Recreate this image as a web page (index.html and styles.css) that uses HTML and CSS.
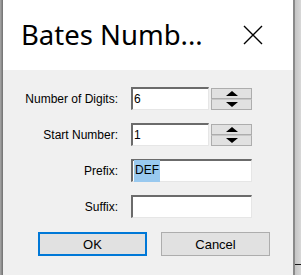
FILE: index.html
```html
<!DOCTYPE html>
<html lang="en">
<head>
  <meta charset="UTF-8">
  <title>Bates Number</title>
  <link rel="stylesheet" href="styles.css">
</head>
<body>
  <div class="frame">
    <div class="edge-left"></div>

    <div class="dialog">
      <div class="titlebar">
        <span class="title">Bates Numb...</span>
        <svg class="close" width="20" height="20" viewBox="0 0 20 20">
          <path d="M1 1 L19 19 M19 1 L1 19" stroke="#000" stroke-width="1.4" fill="none"/>
        </svg>
      </div>

      <div class="content">
        <div class="form">
          <label class="lbl">Number of Digits:</label>
          <div class="field short"><span>6</span></div>
          <div class="spin">
            <div class="spin-btn"><span class="tri up"></span></div>
            <div class="spin-btn"><span class="tri down"></span></div>
          </div>

          <label class="lbl">Start Number:</label>
          <div class="field short"><span>1</span></div>
          <div class="spin">
            <div class="spin-btn"><span class="tri up"></span></div>
            <div class="spin-btn"><span class="tri down"></span></div>
          </div>

          <label class="lbl">Prefix:</label>
          <div class="field wide"><span class="sel">DEF</span></div>

          <label class="lbl">Suffix:</label>
          <div class="field wide"></div>
        </div>

        <div class="buttons">
          <button class="btn default">OK</button>
          <button class="btn">Cancel</button>
        </div>
      </div>
    </div>

    <div class="edge-right"><div class="shadow-line"></div></div>
  </div>
</body>
</html>
```

FILE: styles.css
```css
body {
    margin: 0;
    padding: 0;
    background-color: #f0f0f0;
    font-family: "Liberation Sans", Arial, sans-serif;
}

.frame {
    display: flex;
    height: 275px;
    overflow: hidden;
}

.edge-left {
    width: 3px;
    background: linear-gradient(to right, #a9a9a9, #6f6f6f);
}

.dialog {
    width: 290px;
    display: flex;
    flex-direction: column;
}

.edge-right {
    flex: 1;
    border-left: 2px solid #8a8a8a;
    background: linear-gradient(to right, #c4c4c4, #d8d8d8);
    padding-top: 190px;
}

.shadow-line {
    margin-top: 74px;
    height: 1px;
    background-color: #1a1a1a;
}

.titlebar {
    height: 70px;
    background-color: #fff;
    display: flex;
    align-items: center;
    justify-content: space-between;
    padding: 0 30px 0 18px;
    box-sizing: border-box;
}

.title {
    font-family: "Noto Sans", sans-serif;
    font-size: 27.5px;
    color: #000;
    margin-top: -1px;
}

.content {
    flex: 1;
    background-color: #f0f0f0;
    padding-top: 17px;
}

.form {
    display: grid;
    grid-template-columns: 115px 78px 41px;
    column-gap: 13px;
    row-gap: 13px;
    grid-auto-rows: 23px;
    align-items: center;
}

.lbl {
    text-align: right;
    font-size: 12px;
    color: #000;
}

.field {
    height: 23px;
    box-sizing: border-box;
    background-color: #fff;
    border-top: 2px solid #6b6b6b;
    border-left: 2px solid #6b6b6b;
    border-bottom: 1px solid #e6e6e6;
    border-right: 1px solid #e6e6e6;
    font-size: 12px;
    line-height: 19px;
    padding-left: 1px;
    display: flex;
    align-items: center;
}

.field.wide {
    grid-column: span 2;
    width: 121px;
}

.sel {
    background-color: #99c9ef;
    padding: 1px 1px 2px 1px;
}

.spin {
    display: flex;
    flex-direction: column;
    width: 41px;
    height: 22px;
    margin-left: -11px;
    align-self: end;
}

.spin-btn {
    flex: 1;
    background-color: #e1e1e1;
    border: 1px solid #adadad;
    display: flex;
    align-items: center;
    justify-content: center;
}

.spin-btn + .spin-btn {
    border-top-color: #c8c8c8;
}

.tri {
    width: 0;
    height: 0;
    border-left: 6px solid transparent;
    border-right: 6px solid transparent;
}

.tri.up {
    border-bottom: 5px solid #000;
}

.tri.down {
    border-top: 5px solid #000;
}

.buttons {
    display: flex;
    gap: 14px;
    padding-left: 35px;
    margin-top: 14px;
}

.btn {
    width: 109px;
    height: 24px;
    box-sizing: border-box;
    background-color: #e1e1e1;
    border: 1px solid #adadad;
    font-family: "Liberation Sans", Arial, sans-serif;
    font-size: 13px;
    color: #000;
    padding: 0;
}

.btn.default {
    border: 2px solid #0078d7;
}
```
